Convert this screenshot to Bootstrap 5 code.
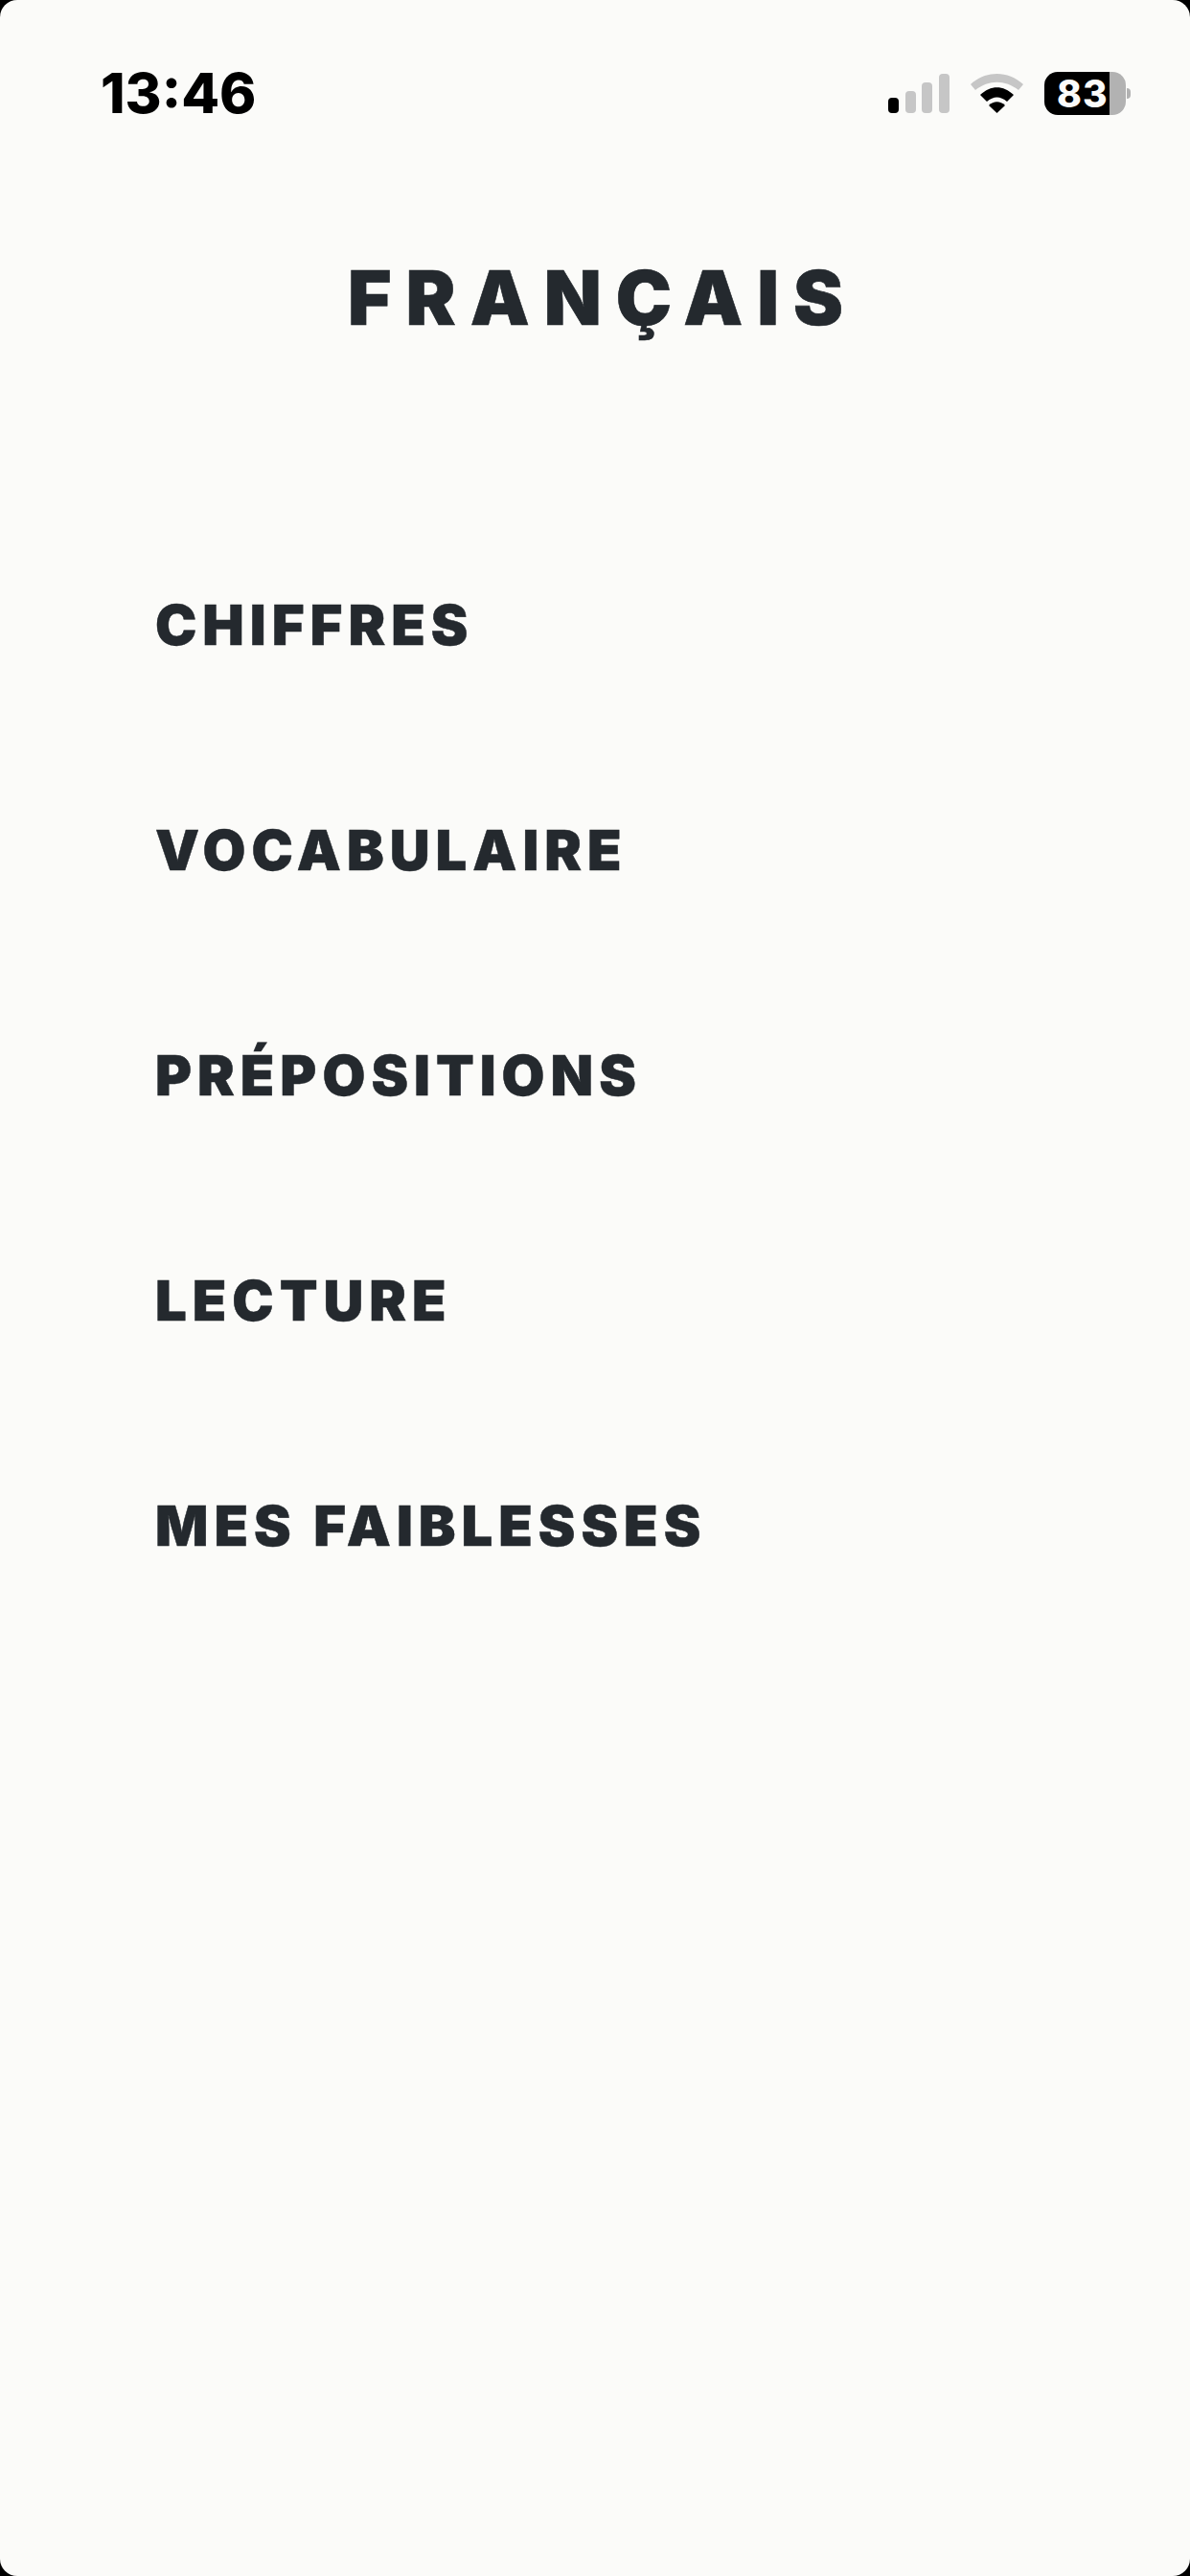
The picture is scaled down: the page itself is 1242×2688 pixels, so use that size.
<!DOCTYPE html>
<html lang="fr">
<head>
<meta charset="utf-8">
<title>Français</title>
<link href="https://cdn.jsdelivr.net/npm/bootstrap@5.3.0/dist/css/bootstrap.min.css" rel="stylesheet">
<style>
html, body { margin: 0; background: #000; }
.screen { width: 1242px; height: 2688px; background: #fbfbf9; border-radius: 18px; overflow: hidden; font-family: Inter, "Liberation Sans", sans-serif; }
.status-row { height: 196px; padding: 57px 62px 0 105px; }
.clock { font-size: 58px; font-weight: 800; line-height: 80px; color: #000; }
.status-icons { gap: 22px; height: 80px; }
.batt { height: 45px; }
.batt-fill { width: 68px; height: 45px; background: #000; color: #fbfbf9; border-radius: 14px 0 0 14px; font-size: 39px; font-weight: 800; line-height: 45px; padding-left: 13px; letter-spacing: 1px; white-space: nowrap; }
.batt-rest { width: 17px; height: 45px; background: #b2b2b2; border-radius: 0 14px 14px 0; }
.batt-nub { width: 4px; height: 11px; margin-left: 1px; background: #b2b2b2; border-radius: 0 6px 6px 0; }
.heading-fr { margin: 0; height: 421px; padding-top: 70px; padding-left: 16px; font-size: 78px; font-weight: 900; line-height: 90px; letter-spacing: 15px; color: #24292e; text-align: center; -webkit-text-stroke: 0.6px #24292e; }
.menu-fr { padding-left: 162px; }
.menu-fr a { display: block; height: 235px; font-size: 58px; font-weight: 900; line-height: 70px; letter-spacing: 6px; color: #24292e; text-decoration: none; -webkit-text-stroke: 0.5px #24292e; }
</style>
</head>
<body>
<div class="screen d-flex flex-column">
  <div class="status-row d-flex justify-content-between align-items-start">
    <div class="clock">13:46</div>
    <div class="status-icons d-flex align-items-center">
      <svg width="64" height="41" viewBox="0 0 64 41"><rect x="0" y="25" width="11" height="16" rx="4" fill="#000"/><rect x="18" y="18" width="11" height="23" rx="4" fill="#c6c6c6"/><rect x="35" y="9" width="11" height="32" rx="4" fill="#c6c6c6"/><rect x="53" y="0" width="11" height="41" rx="4" fill="#c6c6c6"/></svg>
      <svg width="55" height="41" viewBox="0 0 55 41"><path d="M0 11 C16 -3.600 39 -3.600 55 11 L50 17 C36 6 19 6 5 17Z" fill="#c6c6c6"/><path d="M10 22 C21 11.500 34 11.500 45 22 L38 29 C31 23 24 23 17 29Z" fill="#000"/><path d="M19 33 C24 28 31 28 36 33 L27.500 41Z" fill="#000"/></svg>
      <div class="batt d-flex align-items-center">
        <div class="batt-fill">83</div>
        <div class="batt-rest"></div>
        <div class="batt-nub"></div>
      </div>
    </div>
  </div>
  <h1 class="heading-fr">FRANÇAIS</h1>
  <nav class="menu-fr">
    <a href="#">CHIFFRES</a>
    <a href="#">VOCABULAIRE</a>
    <a href="#">PRÉPOSITIONS</a>
    <a href="#">LECTURE</a>
    <a href="#">MES FAIBLESSES</a>
  </nav>
</div>
<script src="https://cdn.jsdelivr.net/npm/bootstrap@5.3.0/dist/js/bootstrap.bundle.min.js"></script>
</body>
</html>
